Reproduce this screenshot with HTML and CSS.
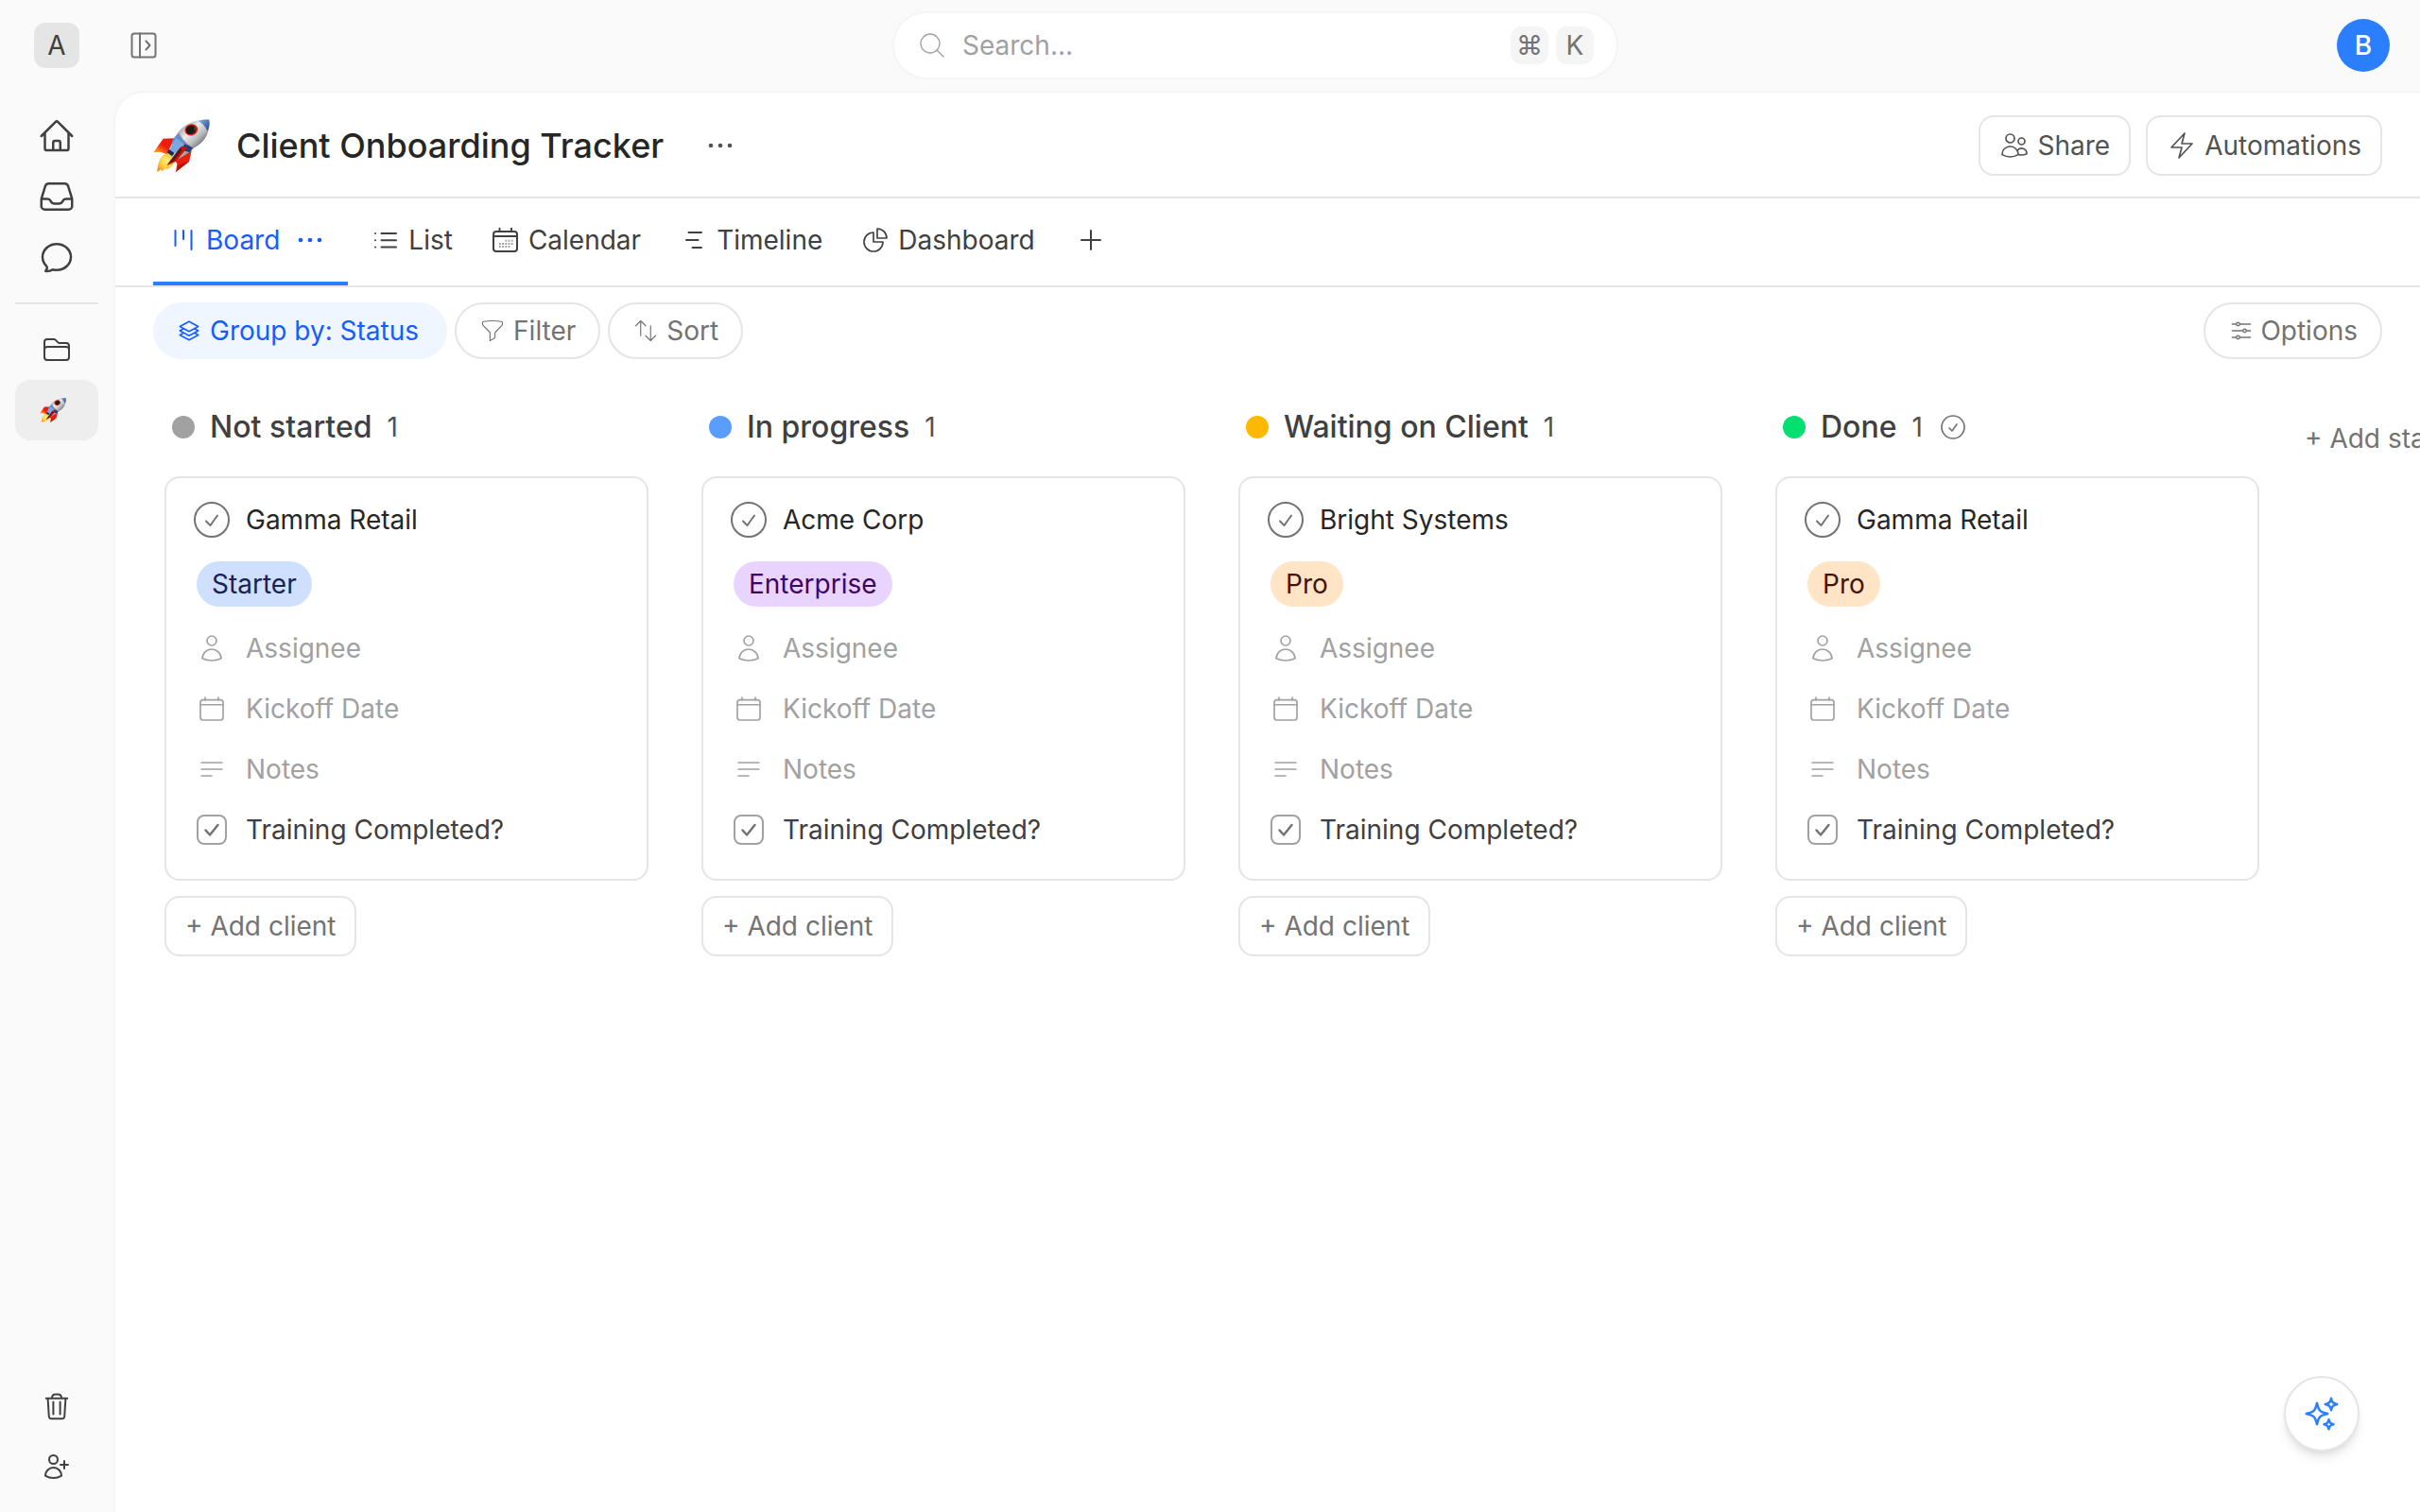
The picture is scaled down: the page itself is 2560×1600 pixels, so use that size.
FILE: index.html
```html
<!DOCTYPE html>
<html lang="en">
<head>
    <meta charset="UTF-8">
    <meta name="viewport" content="width=device-width, initial-scale=1.0">
    <title>Client Onboarding Tracker</title>
    <link rel="stylesheet" href="styles.css">
</head>
<body>
    <!-- Icon sprite -->
    <svg class="sprite" aria-hidden="true">
        <defs>
            <linearGradient id="hull" x1="0" y1="0" x2="1" y2="1">
                <stop offset="0.2" stop-color="#8f9499"/>
                <stop offset="0.42" stop-color="#e9ebec"/>
                <stop offset="0.58" stop-color="#b9bcbe"/>
                <stop offset="0.8" stop-color="#3c3f44"/>
            </linearGradient>
            <linearGradient id="nose" x1="0" y1="0" x2="1" y2="1">
                <stop offset="0" stop-color="#8db8ee"/>
                <stop offset="1" stop-color="#1e3f7d"/>
            </linearGradient>
            <linearGradient id="fin" x1="1" y1="0" x2="0" y2="1">
                <stop offset="0.5" stop-color="#ee1c0c"/>
                <stop offset="0.9" stop-color="#ffa126"/>
            </linearGradient>
            <radialGradient id="flame" cx="0.5" cy="0.45" r="0.6">
                <stop offset="0" stop-color="#fff27a"/>
                <stop offset="0.6" stop-color="#fdc93a"/>
                <stop offset="1" stop-color="#f58a1f"/>
            </radialGradient>
        </defs>
        <symbol id="i-rocket" viewBox="36 42 180 180">
            <path d="M86 150c-14 6-28 20-33 38l-5 28 14-8 1 6 14-10 4 4c12-6 22-18 27-34z" fill="url(#flame)"/>
            <path d="M108 109l-40 1-31 44 20-2 23 7 18-18z" fill="url(#fin)"/>
            <path d="M158 148l-8 36-42 32 4-26-6-10 18-26z" fill="#ee1c0c"/>
            <path d="M108 216l40-33-30 10z" fill="#b51408"/>
            <path d="M214 50c4 26-6 56-26 74-12 11-26 16-34 28l-46 28-26-26 24-50c14-30 56-58 108-54z" fill="url(#hull)"/>
            <path d="M214 50c2 12 0 26-6 36-4-12-16-26-30-32 10-4 24-6 36-4z" fill="url(#nose)"/>
            <path d="M118 92c8 16 20 32 36 40l-12 18-20-8-24-12-2-12c6-10 12-18 22-26z" fill="#5f8fd2"/>
            <path d="M128 124l34 14-10 16-26-8z" fill="#1f3e80"/>
            <path d="M108 108l28 20-24 28-26-6z" fill="#7ba8e2"/>
            <path d="M118 92c8 18 24 36 44 46" fill="none" stroke="#d89a4a" stroke-width="2"/>
            <path d="M126 134l20 4-38 44-28 14 22-30z" fill="#c8150a"/>
            <path d="M122 138l-42 56 22-14 26-34z" fill="#5e1712"/>
            <path d="M86 144l18 12-8 10-16-12z" fill="#1c2c4c"/>
            <ellipse cx="157" cy="82" rx="21" ry="18" transform="rotate(-20 157 82)" fill="#e0200f"/>
            <ellipse cx="156" cy="82" rx="16" ry="14" transform="rotate(-20 156 82)" fill="#1d1a1c"/>
            <path d="M164 84c4-3 6-7 5-11" fill="none" stroke="#6b5f62" stroke-width="3"/>
        </symbol>
        <symbol id="i-panel" viewBox="0 0 32 32">
            <rect x="3.5" y="3.5" width="25" height="25" rx="2.5"/>
            <path d="M12 3.5v25M18.5 11.5l4 4.5-4 4.5"/>
        </symbol>
        <symbol id="i-home" viewBox="0 0 24 24">
            <path d="m2.25 12 8.954-8.955c.44-.439 1.152-.439 1.591 0L21.75 12M4.5 9.75v10.125c0 .621.504 1.125 1.125 1.125H9.75v-4.875c0-.621.504-1.125 1.125-1.125h2.25c.621 0 1.125.504 1.125 1.125V21h4.125c.621 0 1.125-.504 1.125-1.125V9.75M8.25 21h8.25"/>
        </symbol>
        <symbol id="i-inbox" viewBox="0 0 24 24">
            <path d="M2.25 13.5h3.86a2.25 2.25 0 0 1 2.012 1.244l.256.512a2.25 2.25 0 0 0 2.013 1.244h3.218a2.25 2.25 0 0 0 2.013-1.244l.256-.512a2.25 2.25 0 0 1 2.013-1.244h3.859m-19.5.338V18a2.25 2.25 0 0 0 2.25 2.25h15A2.25 2.25 0 0 0 21.75 18v-4.162c0-.224-.034-.447-.1-.661L19.24 5.338a2.25 2.25 0 0 0-2.15-1.588H6.911a2.25 2.25 0 0 0-2.15 1.588L2.35 13.177a2.25 2.25 0 0 0-.1.661Z"/>
        </symbol>
        <symbol id="i-chat" viewBox="0 0 24 24">
            <path d="M12 20.25c4.97 0 9-3.694 9-8.25s-4.03-8.25-9-8.25S3 7.444 3 12c0 2.104.859 4.023 2.273 5.48.432.447.74 1.04.586 1.641a4.483 4.483 0 0 1-.923 1.785A5.969 5.969 0 0 0 6 21c1.282 0 2.47-.402 3.445-1.087.81.22 1.668.337 2.555.337Z"/>
        </symbol>
        <symbol id="i-folder" viewBox="0 0 24 24">
            <path d="M2.25 12.75V12A2.25 2.25 0 0 1 4.5 9.75h15A2.25 2.25 0 0 1 21.75 12v.75m-8.69-6.44-2.12-2.12a1.5 1.5 0 0 0-1.061-.44H4.5A2.25 2.25 0 0 0 2.25 6v12a2.25 2.25 0 0 0 2.25 2.25h15A2.25 2.25 0 0 0 21.75 18V9a2.25 2.25 0 0 0-2.25-2.25h-5.379a1.5 1.5 0 0 1-1.06-.44Z"/>
        </symbol>
        <symbol id="i-trash" viewBox="0 0 32 32">
            <path d="M4.7 7.7h22.6M11 7.5c0-2.4 1.4-4 3.6-4h2.8c2.2 0 3.6 1.6 3.6 4M6.6 8l1.2 19a2.4 2.4 0 0 0 2.4 2.2h11.6a2.4 2.4 0 0 0 2.4-2.2L25.4 8M12.4 11.5v13M19.6 11.5v13"/>
        </symbol>
        <symbol id="i-user-plus" viewBox="0 0 24 24">
            <path d="M18 7.5v3m0 0v3m0-3h3m-3 0h-3m-2.25-4.125a3.375 3.375 0 1 1-6.75 0 3.375 3.375 0 0 1 6.75 0ZM3 19.235v-.11a6.375 6.375 0 0 1 12.75 0v.109A12.318 12.318 0 0 1 9.374 21c-2.331 0-4.512-.645-6.374-1.766Z"/>
        </symbol>
        <symbol id="i-search" viewBox="0 0 24 24">
            <path d="m21 21-5.197-5.197m0 0A7.5 7.5 0 1 0 5.196 5.196a7.5 7.5 0 0 0 10.607 10.607Z"/>
        </symbol>
        <symbol id="i-dots" viewBox="0 0 32 32">
            <g fill="currentColor" stroke="none">
                <circle cx="6" cy="16" r="2.3"/>
                <circle cx="16" cy="16" r="2.3"/>
                <circle cx="26" cy="16" r="2.3"/>
            </g>
        </symbol>
        <symbol id="i-users" viewBox="0 0 24 24">
            <path d="M15 19.128a9.38 9.38 0 0 0 2.625.372 9.337 9.337 0 0 0 4.121-.952 4.125 4.125 0 0 0-7.533-2.493M15 19.128v-.003c0-1.113-.285-2.16-.786-3.07M15 19.128v.106A12.318 12.318 0 0 1 8.624 21c-2.331 0-4.512-.645-6.374-1.766l-.001-.109a6.375 6.375 0 0 1 11.964-3.07M12 6.375a3.375 3.375 0 1 1-6.75 0 3.375 3.375 0 0 1 6.75 0Zm8.25 2.25a2.625 2.625 0 1 1-5.25 0 2.625 2.625 0 0 1 5.25 0Z"/>
        </symbol>
        <symbol id="i-bolt" viewBox="0 0 24 24">
            <path d="m3.75 13.5 10.5-11.25L12 10.5h8.25L9.75 21.75 12 13.5H3.75Z"/>
        </symbol>
        <symbol id="i-board" viewBox="0 0 32 32">
            <path d="M7.5 6v16M16 6v9M24.5 6v20"/>
        </symbol>
        <symbol id="i-list" viewBox="0 0 32 32">
            <path d="M11.5 9H27M11.5 16.2H27M11.5 23.5H27M5 9h.01M5 16.2h.01M5 23.5h.01"/>
        </symbol>
        <symbol id="i-calendar-days" viewBox="0 0 32 32">
            <rect x="3" y="7" width="25" height="21" rx="3"/>
            <path d="M3 12h25M9.5 3.8V7M22 3.8V7"/>
            <path class="days" d="M15.5 16.7h8M9 20h14.6M9 23h11.4" stroke-dasharray="1.8 1.4" stroke-linecap="butt"/>
        </symbol>
        <symbol id="i-timeline" viewBox="0 0 32 32">
            <path d="M10.5 8H24M8 16h12.5M14.5 24H24"/>
        </symbol>
        <symbol id="i-pie" viewBox="0 0 24 24">
            <path d="M10.5 6a7.5 7.5 0 1 0 7.5 7.5h-7.5V6ZM13.5 10.5H21A7.5 7.5 0 0 0 13.5 3v7.5Z"/>
        </symbol>
        <symbol id="i-plus" viewBox="0 0 24 24">
            <path d="M12 4.5v15m7.5-7.5h-15"/>
        </symbol>
        <symbol id="i-stack" viewBox="0 0 24 24">
            <path d="M6.429 9.75 2.25 12l4.179 2.25m0-4.5 5.571 3 5.571-3m-11.142 0L2.25 7.5 12 2.25l9.75 5.25-4.179 2.25m0 0L21.75 12l-4.179 2.25m0 0 4.179 2.25L12 21.75 2.25 16.5l4.179-2.25m11.142 0-5.571 3-5.571-3"/>
        </symbol>
        <symbol id="i-funnel" viewBox="0 0 24 24">
            <path d="M12 3c2.755 0 5.455.232 8.083.678.533.09.917.556.917 1.096v1.044a2.25 2.25 0 0 1-.659 1.591l-5.432 5.432a2.25 2.25 0 0 0-.659 1.591v2.927a2.25 2.25 0 0 1-1.244 2.013L9.75 21v-6.568a2.25 2.25 0 0 0-.659-1.591L3.659 7.409A2.25 2.25 0 0 1 3 5.818V4.774c0-.54.384-1.006.917-1.096A48.32 48.32 0 0 1 12 3Z"/>
        </symbol>
        <symbol id="i-sort" viewBox="0 0 24 24">
            <path d="M3 7.5 7.5 3m0 0L12 7.5M7.5 3v13.5m13.5 0L16.5 21m0 0L12 16.5m4.5 4.5V7.5"/>
        </symbol>
        <symbol id="i-sliders" viewBox="0 0 24 24">
            <path d="M10.5 6h9.75M10.5 6a1.5 1.5 0 1 1-3 0m3 0a1.5 1.5 0 1 0-3 0M3.75 6H7.5m3 12h9.75m-9.75 0a1.5 1.5 0 0 1-3 0m3 0a1.5 1.5 0 0 0-3 0m-3.75 0H7.5m9-6h3.75m-3.75 0a1.5 1.5 0 0 1-3 0m3 0a1.5 1.5 0 0 0-3 0m-9.75 0h9.75"/>
        </symbol>
        <symbol id="i-check-circle" viewBox="0 0 24 24">
            <path d="M9 12.75 11.25 15 15 9.75M21 12a9 9 0 1 1-18 0 9 9 0 0 1 18 0Z"/>
        </symbol>
        <symbol id="i-user" viewBox="0 0 24 24">
            <path d="M15.75 6a3.75 3.75 0 1 1-7.5 0 3.75 3.75 0 0 1 7.5 0ZM4.501 20.118a7.5 7.5 0 0 1 14.998 0A17.933 17.933 0 0 1 12 21.75c-2.676 0-5.216-.584-7.499-1.632Z"/>
        </symbol>
        <symbol id="i-calendar" viewBox="0 0 24 24">
            <rect x="3" y="5" width="18" height="16" rx="2"/>
            <path d="M3 8.8h18M6.75 3v2M17.25 3v2"/>
        </symbol>
        <symbol id="i-notes" viewBox="0 0 24 24">
            <path d="M3.75 6.75h16.5M3.75 12h16.5m-16.5 5.25H12"/>
        </symbol>
        <symbol id="i-sparkles" viewBox="0 0 24 24">
            <path d="M9.813 15.904 9 18.75l-.813-2.846a4.5 4.5 0 0 0-3.09-3.09L2.25 12l2.846-.813a4.5 4.5 0 0 0 3.09-3.09L9 5.25l.813 2.846a4.5 4.5 0 0 0 3.09 3.09L15.75 12l-2.846.813a4.5 4.5 0 0 0-3.09 3.09ZM18.259 8.715 18 9.75l-.259-1.035a3.375 3.375 0 0 0-2.455-2.456L14.25 6l1.036-.259a3.375 3.375 0 0 0 2.455-2.456L18 2.25l.259 1.035a3.375 3.375 0 0 0 2.456 2.456L21.75 6l-1.035.259a3.375 3.375 0 0 0-2.456 2.456ZM16.894 20.567 16.5 21.75l-.394-1.183a2.25 2.25 0 0 0-1.423-1.423L13.5 18.75l1.183-.394a2.25 2.25 0 0 0 1.423-1.423l.394-1.183.394 1.183a2.25 2.25 0 0 0 1.423 1.423l1.183.394-1.183.394a2.25 2.25 0 0 0-1.423 1.423Z"/>
        </symbol>
    </svg>

    <div class="app">
        <nav class="sidebar" aria-label="Main">
            <button class="workspace" type="button" aria-label="Workspace">A</button>
            <div class="side-group">
                <a class="side-link" href="#home" aria-label="Home"><svg class="icon xl"><use href="#i-home"/></svg></a>
                <a class="side-link" href="#inbox" aria-label="Inbox"><svg class="icon xl"><use href="#i-inbox"/></svg></a>
                <a class="side-link" href="#chat" aria-label="Chat"><svg class="icon xl"><use href="#i-chat"/></svg></a>
            </div>
            <hr class="side-divider">
            <div class="side-group">
                <a class="side-link" href="#folders" aria-label="Folders"><svg class="icon"><use href="#i-folder"/></svg></a>
                <a class="side-link active" href="#tracker" aria-label="Client Onboarding Tracker"><svg class="rocket-small"><use href="#i-rocket"/></svg></a>
            </div>
            <div class="side-group side-bottom">
                <a class="side-link" href="#trash" aria-label="Trash"><svg class="icon px"><use href="#i-trash"/></svg></a>
                <a class="side-link" href="#invite" aria-label="Invite"><svg class="icon"><use href="#i-user-plus"/></svg></a>
            </div>
        </nav>

        <div class="page">
            <header class="topbar">
                <button class="icon-button panel-toggle" type="button" aria-label="Expand sidebar"><svg class="icon px"><use href="#i-panel"/></svg></button>
                <label class="search">
                    <svg class="icon thin"><use href="#i-search"/></svg>
                    <input type="search" placeholder="Search..." aria-label="Search">
                    <span class="keys"><kbd>⌘</kbd><kbd>K</kbd></span>
                </label>
                <button class="avatar" type="button" aria-label="Account">B</button>
            </header>

            <main class="main">
                <div class="title-row">
                    <svg class="rocket"><use href="#i-rocket"/></svg>
                    <h1>Client Onboarding Tracker</h1>
                    <button class="icon-button title-more" type="button" aria-label="More"><svg class="icon px"><use href="#i-dots"/></svg></button>
                    <div class="title-actions">
                        <button class="button" type="button"><svg class="icon medium"><use href="#i-users"/></svg>Share</button>
                        <button class="button" type="button"><svg class="icon medium"><use href="#i-bolt"/></svg>Automations</button>
                    </div>
                </div>

                <div class="tabs">
                    <div class="tab active">
                        <a class="tab-link" href="#board"><svg class="icon px"><use href="#i-board"/></svg>Board</a>
                        <button class="icon-button tab-more" type="button" aria-label="View settings"><svg class="icon px"><use href="#i-dots"/></svg></button>
                    </div>
                    <a class="tab tab-link" href="#list"><svg class="icon px"><use href="#i-list"/></svg>List</a>
                    <a class="tab tab-link" href="#calendar"><svg class="icon px"><use href="#i-calendar-days"/></svg>Calendar</a>
                    <a class="tab tab-link" href="#timeline"><svg class="icon px"><use href="#i-timeline"/></svg>Timeline</a>
                    <a class="tab tab-link" href="#dashboard"><svg class="icon medium"><use href="#i-pie"/></svg>Dashboard</a>
                    <button class="icon-button add-view" type="button" aria-label="Add view"><svg class="icon"><use href="#i-plus"/></svg></button>
                </div>

                <div class="toolbar">
                    <button class="chip chip-active" type="button"><svg class="icon sm"><use href="#i-stack"/></svg>Group by: Status</button>
                    <button class="chip" type="button"><svg class="icon md thin"><use href="#i-funnel"/></svg>Filter</button>
                    <button class="chip" type="button"><svg class="icon md thin"><use href="#i-sort"/></svg>Sort</button>
                    <button class="chip chip-options" type="button"><svg class="icon md medium"><use href="#i-sliders"/></svg>Options</button>
                </div>

                <div class="board">
                    <section class="column">
                        <h2 class="column-title"><span class="dot dot-gray"></span>Not started<span class="count">1</span></h2>
                        <article class="card">
                            <div class="row name"><svg class="icon complete"><use href="#i-check-circle"/></svg>Gamma Retail</div>
                            <div class="row-tag"><span class="tag tag-blue">Starter</span></div>
                            <div class="row empty"><svg class="icon medium"><use href="#i-user"/></svg>Assignee</div>
                            <div class="row empty"><svg class="icon medium"><use href="#i-calendar"/></svg>Kickoff Date</div>
                            <div class="row empty"><svg class="icon medium"><use href="#i-notes"/></svg>Notes</div>
                            <label class="row"><input class="check" type="checkbox">Training Completed?</label>
                        </article>
                        <button class="button add-client" type="button">+ Add client</button>
                    </section>

                    <section class="column">
                        <h2 class="column-title"><span class="dot dot-blue"></span>In progress<span class="count">1</span></h2>
                        <article class="card">
                            <div class="row name"><svg class="icon complete"><use href="#i-check-circle"/></svg>Acme Corp</div>
                            <div class="row-tag"><span class="tag tag-purple">Enterprise</span></div>
                            <div class="row empty"><svg class="icon medium"><use href="#i-user"/></svg>Assignee</div>
                            <div class="row empty"><svg class="icon medium"><use href="#i-calendar"/></svg>Kickoff Date</div>
                            <div class="row empty"><svg class="icon medium"><use href="#i-notes"/></svg>Notes</div>
                            <label class="row"><input class="check" type="checkbox">Training Completed?</label>
                        </article>
                        <button class="button add-client" type="button">+ Add client</button>
                    </section>

                    <section class="column">
                        <h2 class="column-title"><span class="dot dot-yellow"></span>Waiting on Client<span class="count">1</span></h2>
                        <article class="card">
                            <div class="row name"><svg class="icon complete"><use href="#i-check-circle"/></svg>Bright Systems</div>
                            <div class="row-tag"><span class="tag tag-orange">Pro</span></div>
                            <div class="row empty"><svg class="icon medium"><use href="#i-user"/></svg>Assignee</div>
                            <div class="row empty"><svg class="icon medium"><use href="#i-calendar"/></svg>Kickoff Date</div>
                            <div class="row empty"><svg class="icon medium"><use href="#i-notes"/></svg>Notes</div>
                            <label class="row"><input class="check" type="checkbox">Training Completed?</label>
                        </article>
                        <button class="button add-client" type="button">+ Add client</button>
                    </section>

                    <section class="column">
                        <h2 class="column-title"><span class="dot dot-green"></span>Done<span class="count">1</span><svg class="icon medium done-icon"><use href="#i-check-circle"/></svg></h2>
                        <article class="card">
                            <div class="row name"><svg class="icon complete"><use href="#i-check-circle"/></svg>Gamma Retail</div>
                            <div class="row-tag"><span class="tag tag-orange">Pro</span></div>
                            <div class="row empty"><svg class="icon medium"><use href="#i-user"/></svg>Assignee</div>
                            <div class="row empty"><svg class="icon medium"><use href="#i-calendar"/></svg>Kickoff Date</div>
                            <div class="row empty"><svg class="icon medium"><use href="#i-notes"/></svg>Notes</div>
                            <label class="row"><input class="check" type="checkbox">Training Completed?</label>
                        </article>
                        <button class="button add-client" type="button">+ Add client</button>
                    </section>

                    <button class="add-status" type="button">+ Add status</button>
                </div>
            </main>
        </div>
    </div>

    <button class="assistant" type="button" aria-label="Assistant"><svg class="icon xl"><use href="#i-sparkles"/></svg></button>
</body>
</html>
```
FILE: styles.css
```css
* {
    margin: 0;
    padding: 0;
    box-sizing: border-box;
}

body {
    font-family: Inter, "Liberation Sans", sans-serif;
    font-size: 28px;
    line-height: 40px;
    color: #404040;
    background: #fafafa;
    overflow: hidden;
}

button,
input,
kbd {
    font: inherit;
    color: inherit;
}

button {
    background: none;
    border: none;
    cursor: pointer;
}

a {
    color: inherit;
    text-decoration: none;
}

.sprite {
    position: absolute;
    width: 0;
    height: 0;
}

/* Icons */
.icon {
    width: 32px;
    height: 32px;
    flex-shrink: 0;
    fill: none;
    stroke: currentColor;
    stroke-width: 1.5;
    stroke-linecap: round;
    stroke-linejoin: round;
}

.icon.sm { width: 24px; height: 24px; }
.icon.md { width: 28px; height: 28px; }
.icon.xl { width: 40px; height: 40px; }
.icon.thin { stroke-width: 1; }
.icon.medium { stroke-width: 1.25; }
.icon.px { stroke-width: 2; }

.days {
    stroke: #a1a1a1;
}

.icon-button {
    display: flex;
    align-items: center;
    justify-content: center;
    width: 48px;
    height: 48px;
}

/* Layout */
.app {
    display: flex;
    height: 100vh;
}

.page {
    flex: 1;
    min-width: 0;
    display: flex;
    flex-direction: column;
}

/* Sidebar */
.sidebar {
    width: 120px;
    padding: 24px 16px 16px;
    display: flex;
    flex-direction: column;
    align-items: center;
}

.workspace {
    width: 48px;
    height: 48px;
    border-radius: 12px;
    background: #e5e5e5;
    margin-bottom: 40px;
}

.side-group {
    width: 100%;
}

.side-link {
    display: flex;
    align-items: center;
    justify-content: center;
    height: 64px;
    border-radius: 16px;
}

.side-link.active {
    background: #eeeeee;
    padding-right: 8px;
}

.side-divider {
    width: 100%;
    border: none;
    border-top: 2px solid #e5e5e5;
    margin: 16px 0;
}

.side-bottom {
    margin-top: auto;
}

.rocket-small {
    width: 28px;
    height: 28px;
}

/* Top bar */
.topbar {
    height: 96px;
    padding: 0 32px 0 8px;
    display: grid;
    grid-template-columns: 1fr 768px 1fr;
    align-items: center;
}

.panel-toggle {
    color: #737373;
}

.search {
    height: 72px;
    padding: 0 24px;
    display: flex;
    align-items: center;
    gap: 16px;
    background: #fff;
    border: 2px solid #f5f5f5;
    border-radius: 36px;
    color: #a1a1a1;
}

.search .icon {
    color: #a1a1a1;
}

.search input {
    flex: 1;
    min-width: 0;
    border: none;
    outline: none;
    background: none;
    color: #404040;
}

.search input::placeholder {
    color: #a1a1a1;
    opacity: 1;
}

.keys {
    display: flex;
    gap: 8px;
}

.keys kbd {
    width: 40px;
    height: 40px;
    border-radius: 12px;
    background: #f5f5f5;
    color: #737373;
    text-align: center;
}

.avatar {
    justify-self: end;
    width: 56px;
    height: 56px;
    border-radius: 50%;
    background: #2b7fff;
    color: #fff;
    font-weight: 500;
}

/* Main panel */
.main {
    flex: 1;
    min-height: 0;
    display: flex;
    flex-direction: column;
    background: #fff;
    border-top: 2px solid #f5f5f5;
    border-left: 2px solid #f5f5f5;
    border-top-left-radius: 32px;
    overflow: hidden;
}

.title-row {
    height: 112px;
    padding: 2px 40px 0;
    display: flex;
    align-items: center;
    border-bottom: 2px solid #e5e5e5;
}

.rocket {
    width: 60px;
    height: 60px;
}

.title-row h1 {
    margin-left: 28px;
    font-size: 36px;
    font-weight: 500;
    color: #262626;
}

.title-more {
    margin-left: 36px;
    color: #525252;
}

.title-actions {
    margin-left: auto;
    display: flex;
    gap: 16px;
}

.button {
    height: 64px;
    padding: 0 20px;
    display: flex;
    align-items: center;
    gap: 8px;
    background: #fff;
    border: 2px solid #e5e5e5;
    border-radius: 16px;
    color: #525252;
}

/* Tabs */
.tabs {
    height: 94px;
    padding: 0 40px;
    display: flex;
    gap: 8px;
    border-bottom: 2px solid #e5e5e5;
}

.tab {
    padding: 0 16px;
    border-bottom: 4px solid transparent;
    display: flex;
    align-items: center;
    gap: 8px;
}

.tab-link {
    display: flex;
    align-items: center;
    gap: 8px;
}

.tab.active {
    color: #155dfc;
    border-bottom-color: #2b7fff;
}

.add-view {
    width: 70px;
    height: 88px;
}

/* Toolbar */
.toolbar {
    padding: 16px 40px;
    display: flex;
    gap: 8px;
}

.chip {
    height: 60px;
    padding: 0 24px;
    display: flex;
    align-items: center;
    gap: 8px;
    border: 2px solid #e5e5e5;
    border-radius: 30px;
    color: #737373;
}

.chip-active {
    padding-right: 28px;
    gap: 10px;
    background: #eff6ff;
    border-color: #eff6ff;
    color: #155dfc;
}

.chip-options {
    gap: 6px;
    margin-left: auto;
}

/* Board */
.board {
    flex: 1;
    padding: 24px 36px;
    display: flex;
    align-items: flex-start;
    gap: 24px;
    overflow: hidden;
}

.column {
    width: 544px;
    flex-shrink: 0;
    padding: 0 16px;
}

.column-title {
    height: 64px;
    padding: 0 8px;
    margin-bottom: 20px;
    display: flex;
    align-items: center;
    gap: 16px;
    font-size: 32px;
    font-weight: 500;
}

.dot {
    width: 24px;
    height: 24px;
    border-radius: 50%;
}

.dot-gray { background: #a1a1a1; }
.dot-blue { background: #599eff; }
.dot-yellow { background: #ffb900; }
.dot-green { background: #05df72; }

.count {
    font-size: 28px;
    font-weight: 400;
    color: #525252;
}

.done-icon {
    color: #737373;
}

/* Cards */
.card {
    padding: 12px 24px 20px;
    background: #fff;
    border: 2px solid #e5e5e5;
    border-radius: 16px;
}

.row {
    height: 64px;
    padding-left: 8px;
    display: flex;
    align-items: center;
    gap: 20px;
}

.row.name {
    padding-left: 0;
    gap: 12px;
    color: #262626;
}

.row.empty {
    color: #a1a1a1;
}

.icon.complete {
    width: 48px;
    height: 48px;
    stroke-width: 1;
    color: #737373;
}

.row-tag {
    height: 72px;
    padding-left: 8px;
    display: flex;
    align-items: center;
}

.tag {
    height: 48px;
    line-height: 48px;
    padding: 0 16px;
    border-radius: 24px;
}

.tag-blue {
    background: #cfe0ff;
    color: #162456;
}

.tag-purple {
    background: #e9d4ff;
    color: #3c0366;
}

.tag-orange {
    background: #ffe5c6;
    color: #441306;
}

.check {
    appearance: none;
    width: 32px;
    height: 32px;
    border: 2px solid #a1a1a1;
    border-radius: 8px;
    background: url("data:image/svg+xml,%3Csvg xmlns='http://www.w3.org/2000/svg' viewBox='0 0 28 28'%3E%3Cpath d='M7.5 14.5l4.5 5 8.5-10.5' fill='none' stroke='%23737373' stroke-width='2.5' stroke-linecap='round' stroke-linejoin='round'/%3E%3C/svg%3E") center / 28px no-repeat;
}

.add-client {
    margin-top: 16px;
    color: #737373;
}

.add-status {
    height: 64px;
    margin-top: 12px;
    padding: 0 8px;
    flex-shrink: 0;
    color: #737373;
    white-space: nowrap;
}

/* Floating assistant button */
.assistant {
    position: fixed;
    right: 64px;
    bottom: 64px;
    width: 80px;
    height: 80px;
    display: flex;
    align-items: center;
    justify-content: center;
    background: #fff;
    border: 2px solid #e5e5e5;
    border-radius: 50%;
    color: #2b7fff;
    box-shadow: 0 8px 12px -2px rgba(0, 0, 0, 0.1), 0 4px 8px -4px rgba(0, 0, 0, 0.1);
}
```
